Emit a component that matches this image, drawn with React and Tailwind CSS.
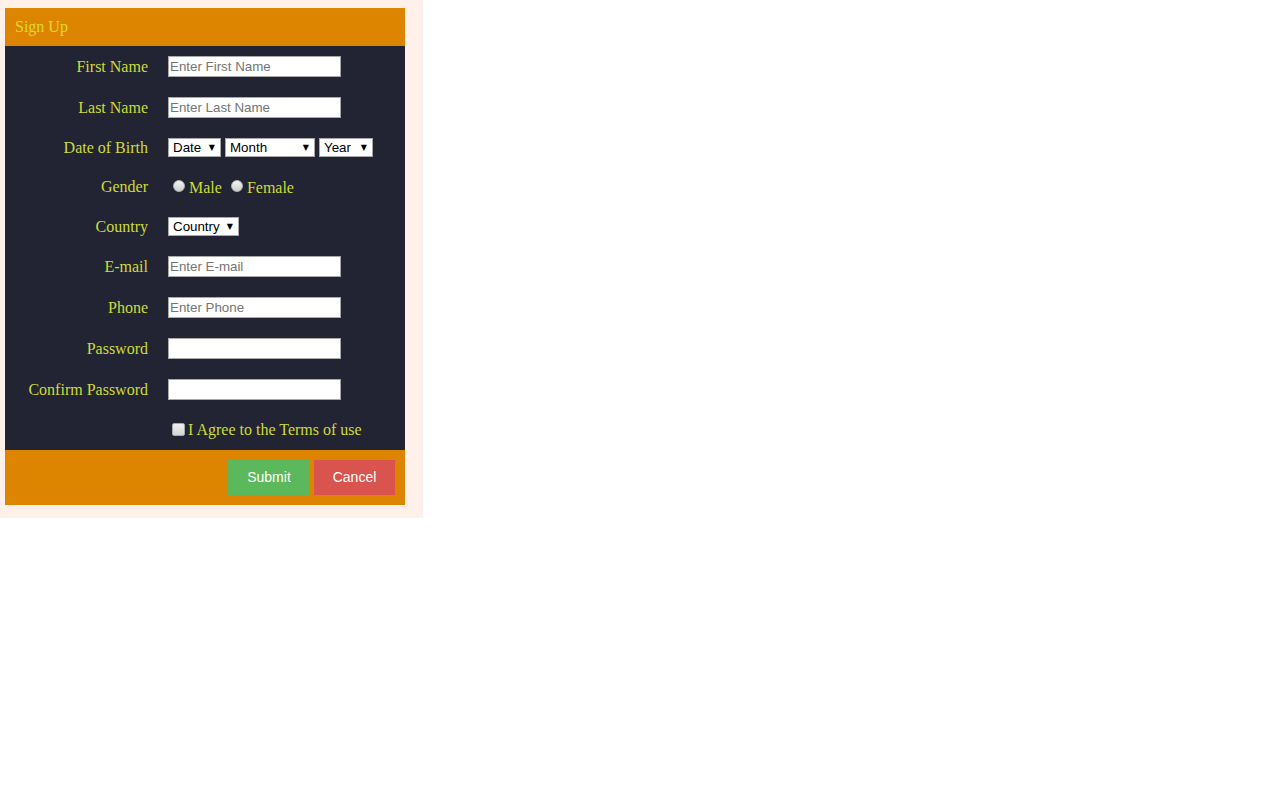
import React from 'react';

const serif = { fontFamily: '"Liberation Serif", "Times New Roman", serif' };

function Row({ label, h, children }) {
  return (
    <div className={`flex items-center ${h}`}>
      <label className="w-[143px] shrink-0 text-right text-[16px] text-[#cddc39]">{label}</label>
      <div className="ml-[20px] flex items-center">{children}</div>
    </div>
  );
}

function TextBox({ placeholder, type = 'text' }) {
  return (
    <input
      type={type}
      placeholder={placeholder}
      className="w-[173px] h-[21px] bg-white border border-[#a9a9a9] px-[1px] text-[13.33px] text-black placeholder:text-[#757575] outline-none font-['Liberation_Sans',Arial,sans-serif]"
    />
  );
}

function Select({ width, label, options = [] }) {
  return (
    <div className={`relative h-[19px] bg-white border border-[#a9a9a9] ${width}`}>
      <select
        defaultValue=""
        className="appearance-none block w-full h-[17px] bg-transparent pl-[4px] py-0 text-[13.33px] leading-[17px] text-black outline-none font-['Liberation_Sans',Arial,sans-serif]"
      >
        <option value="">{label}</option>
        {options.map(o => (
          <option key={o} value={o}>{o}</option>
        ))}
      </select>
      <span className="pointer-events-none absolute inset-y-0 right-[5px] flex items-center text-[8px] text-black font-['DejaVu_Sans',sans-serif]">▼</span>
    </div>
  );
}

function Radio({ name, text }) {
  return (
    <label className="flex items-center">
      <input
        type="radio"
        name={name}
        className="appearance-none ml-[5px] mr-[4px] w-[12px] h-[12px] rounded-full border border-[#b4b4b4] bg-linear-to-b from-[#f4f4f4] to-[#cfcfcf] -translate-y-[1px]"
      />
      <span className="text-[16px] text-[#cddc39] translate-y-[1px]">{text}</span>
    </label>
  );
}

export default function App() {
  const days = Array.from({ length: 31 }, (_, i) => String(i + 1));
  const months = ['January', 'February', 'March', 'April', 'May', 'June', 'July', 'August', 'September', 'October', 'November', 'December'];
  const years = Array.from({ length: 60 }, (_, i) => String(2017 - i));

  return (
    <div style={serif} className="w-[423px] bg-[#fff0e9] pt-[8px] pl-[5px] pr-[18px] pb-[13px]">
      <div className="w-[400px]">
        <div className="h-[38px] bg-[#dd8500] flex items-center px-[10px] text-[16px] text-[#dfd832]">
          Sign Up
        </div>

        <div className="bg-[#222433]">
          <Row label="First Name" h="h-[41px]"><TextBox placeholder="Enter First Name" /></Row>
          <Row label="Last Name" h="h-[41px]"><TextBox placeholder="Enter Last Name" /></Row>
          <Row label="Date of Birth" h="h-[39px]">
            <div className="flex gap-[4px]">
              <Select width="w-[53px]" label="Date" options={days} />
              <Select width="w-[90px]" label="Month" options={months} />
              <Select width="w-[54px]" label="Year" options={years} />
            </div>
          </Row>
          <Row label="Gender" h="h-[40px]">
            <Radio name="gender" text="Male" />
            <span className="w-[4px]" />
            <Radio name="gender" text="Female" />
          </Row>
          <Row label="Country" h="h-[39px]">
            <Select width="w-[71px]" label="Country" options={['India', 'USA', 'UK', 'Canada']} />
          </Row>
          <Row label="E-mail" h="h-[41px]"><TextBox placeholder="Enter E-mail" type="email" /></Row>
          <Row label="Phone" h="h-[41px]"><TextBox placeholder="Enter Phone" /></Row>
          <Row label="Password" h="h-[41px]"><TextBox type="password" /></Row>
          <Row label="Confirm Password" h="h-[41px]"><TextBox type="password" /></Row>
          <Row label="" h="h-[40px]">
            <label className="flex items-center">
              <input
                type="checkbox"
                className="appearance-none ml-[4px] mr-[3px] w-[13px] h-[13px] rounded-[2px] border border-[#a8a8a8] bg-linear-to-b from-[#f0f0f0] to-[#d4d4d4] -translate-y-[1px]"
              />
              <span className="text-[16px] text-[#cddc39]">I Agree to the Terms of use</span>
            </label>
          </Row>
        </div>

        <div className="h-[55px] bg-[#dd8500] flex items-center justify-end gap-[4px] pr-[10px]">
          <button className="w-[82px] h-[35px] bg-[#5cb85c] text-white text-[14px] font-['Liberation_Sans',Arial,sans-serif]">Submit</button>
          <button className="w-[81px] h-[35px] bg-[#d9534f] text-white text-[14px] font-['Liberation_Sans',Arial,sans-serif]">Cancel</button>
        </div>
      </div>
    </div>
  );
}
